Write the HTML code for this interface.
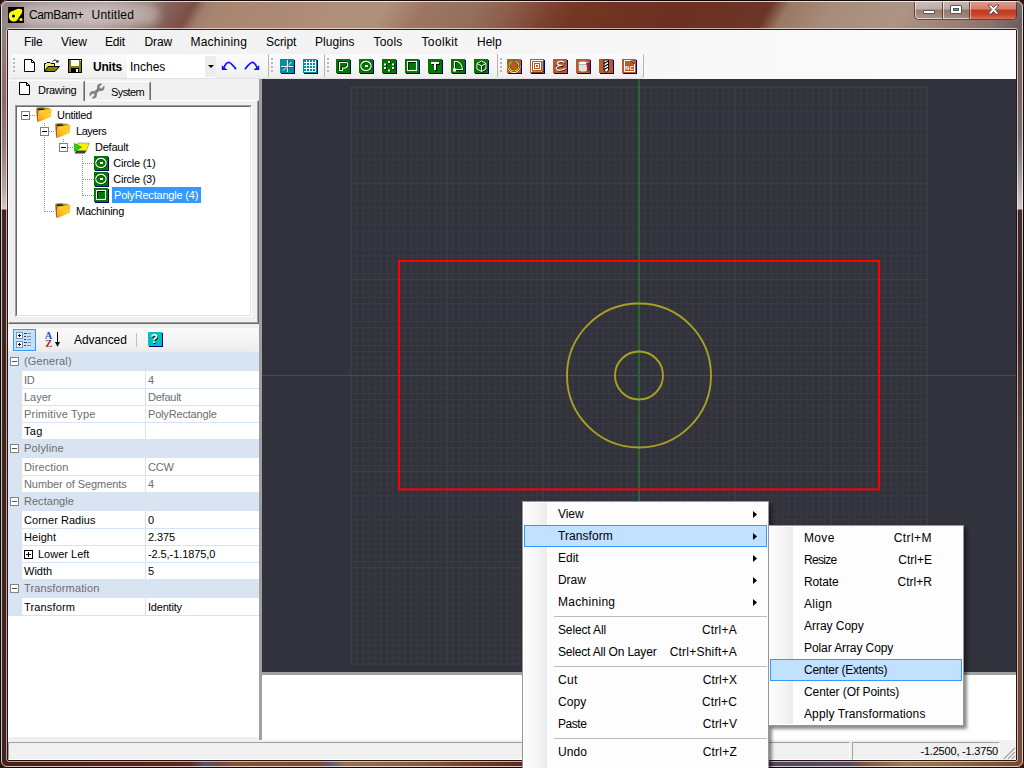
<!DOCTYPE html>
<html lang="en">
<head>
<meta charset="utf-8">
<title>CamBam+ Untitled</title>
<style>
html,body{margin:0;padding:0;}
body{width:1024px;height:768px;overflow:hidden;position:relative;background:#2e0e08;font-family:"Liberation Sans",sans-serif;font-size:12px;color:#000;}
.a{position:absolute;}
.t{position:absolute;white-space:nowrap;line-height:16px;}
#frame{left:0;top:0;width:1024px;height:768px;border-radius:7px;overflow:hidden;
 background:linear-gradient(95deg,#958383 0,#a39191 40px,#ad9b9b 110px,#a38884 165px,#a07c70 215px,#aa8672 270px,#b08c76 330px,#b6947e 380px,#9b7058 450px,#855440 500px,#80503c 540px,#6b3322 565px,#6a3020 680px,#6c3424 758px,#94705e 780px,#a88c7a 830px,#ae9484 900px,#9a7a6a 980px,#6a4a40 1024px);}
#client{left:8px;top:30px;width:1008px;height:730px;background:#f0f0f0;}
/* menu bar */
.mi{position:absolute;top:34px;line-height:16px;font-size:12px;white-space:nowrap;}
/* canvas */
#canvas{left:262px;top:79px;width:754px;height:593px;background:#32323c;overflow:hidden;}
/* tree */
.tr{position:absolute;font-size:11px;line-height:16px;white-space:nowrap;}
/* property grid */
.cat{position:absolute;left:8px;width:251px;height:19px;background:#d9e4f2;}
.cat span{position:absolute;left:16px;top:1px;font-size:11px;line-height:16px;color:#6d6d6d;white-space:nowrap;}
.cat i{position:absolute;left:2px;top:5px;width:7px;height:7px;border:1px solid #848484;background:#fff;}
.cat i:after{content:"";position:absolute;left:1px;top:3px;width:5px;height:1px;background:#505050;}
.pr{position:absolute;left:22px;width:237px;height:16px;overflow:hidden;background:#fff;border-bottom:1px solid #d9e4f2;font-size:11px;line-height:16px;white-space:nowrap;}
.pr b{position:absolute;left:2px;top:0;font-weight:normal;}
.pr u{position:absolute;left:123px;top:0;width:1px;height:18px;background:#d9e4f2;}
.pr.f b,.pr.f s{top:1px;}
.pr s{position:absolute;left:126px;top:0;text-decoration:none;}
.g{color:#6d6d6d;}
/* context menus */
.cm{position:absolute;background:#fdfdfd;border:1px solid #979797;box-shadow:3px 3px 3px rgba(0,0,0,0.45);}
.cm .gut{position:absolute;left:1px;top:1px;bottom:1px;width:23px;background:linear-gradient(90deg,#fcfcfc,#f4f4f4 60%,#ebebeb);}
.cmi{position:absolute;font-size:12px;line-height:16px;white-space:nowrap;}
.sep{position:absolute;height:1px;background:#bdbdbd;}
.hl{position:absolute;background:#c2e0ff;border:1px solid #3399ff;box-sizing:border-box;}
.arr{position:absolute;width:4px;height:7px;background:#000;clip-path:polygon(0 0,100% 50%,0 100%);}
</style>
</head>
<body>
<div id="frame" class="a">
<div class="a" style="left:0;top:0;width:1024px;height:30px;background:linear-gradient(120deg,#958383 8px,#a39191 42px,#ab9999 94px,#9a8480 124px,#86645c 146px,#7c5046 170px,#a07e6a 181px,#a8866e 194px,#aa8872 241px,#b08e78 293px,#b09078 337px,#9c7660 371px,#94705a 415px,#8a5c48 449px,#7c4430 479px,#733622 505px,#6c3020 596px,#6c3626 670px,#9a7862 686px,#a88c7a 726px,#ae9484 787px,#9a8074 839px,#857068 874px,#6e6060 894px)"></div>
<!-- side / bottom glass -->
<div class="a" style="left:0;top:28px;width:8px;height:740px;background:linear-gradient(180deg,#938181 0,#8a6a66 72px,#98807c 122px,#bca6a4 162px,#d8c8c8 181px,#45241f 182px,#3e221c 740px)"></div>
<div class="a" style="left:1016px;top:28px;width:8px;height:740px;background:linear-gradient(180deg,#6e6060 0,#7a6662 72px,#757070 107px,#999494 142px,#d2caca 181px,#432a28 182px,#402626 312px,#6a5048 422px,#705040 572px,#7a4a38 740px)"></div>
<div class="a" style="left:0;top:760px;width:1024px;height:8px;background:linear-gradient(90deg,#4a1e16 0,#5a2418 150px,#5e2a1e 190px,#5a5068 205px,#6a4a48 218px,#8a5030 235px,#7a4a30 320px,#605878 330px,#9a7050 345px,#8a5a3c 420px,#7a3c24 470px,#5e2a1c 522px,#5a2a1e 760px,#54465a 775px,#5a4a58 850px,#8a5c40 872px,#a07850 905px,#94683f 955px,#7a4a30 1010px)"></div>
<!-- title bar -->
<div class="a" style="left:0;top:0;width:1024px;height:768px;box-sizing:border-box;border:1px solid rgba(10,5,5,0.95);border-radius:7px;z-index:3"></div>
<div class="a" style="left:1px;top:1px;width:1022px;height:766px;box-sizing:border-box;border:1px solid rgba(255,255,255,0.75);border-radius:6px;z-index:3"></div>
<div class="a" style="left:6px;top:28px;width:1012px;height:734px;border:1px solid rgba(255,255,255,0.6);border-radius:3px;box-sizing:border-box"></div>
<div class="a" style="left:7px;top:29px;width:1010px;height:732px;border:1px solid rgba(35,15,12,0.9);border-radius:2px;box-sizing:border-box"></div>
<!-- glow behind title -->
<div class="a" style="left:20px;top:4px;width:140px;height:22px;border-radius:11px;background:rgba(255,255,255,0.35);filter:blur(5px)"></div>
<!-- app icon -->
<svg class="a" style="left:8px;top:7px" width="16" height="16" viewBox="0 0 16 16"><rect width="16" height="16" fill="#000"/><path d="M1 8 C1 5 4 4 6 3.5 C9 1.5 12 1 14 2.5 C15 5 13 8 11 10 C10 13 8 15 5 14.5 C2 14 0.5 11 1 8Z" fill="#ffff00"/><circle cx="5.5" cy="9" r="1.5" fill="#000"/><circle cx="13" cy="12.5" r="1.6" fill="#ffff00"/></svg>
<div class="t" style="letter-spacing:-0.36px;/*f*/left:29px;top:7px;font-size:12px;">CamBam+</div><div class="t" style="letter-spacing:0.25px;/*f*/left:91.5px;top:7px;font-size:12px;">Untitled</div>
<!-- window buttons -->
<div class="a" style="left:914px;top:0;width:103px;height:20px;border:1px solid rgba(60,35,30,0.75);border-top:none;border-radius:0 0 5px 5px;box-sizing:border-box;overflow:hidden;background:linear-gradient(180deg,rgba(255,255,255,0.45) 0,rgba(255,255,255,0.3) 9px,rgba(120,90,80,0.25) 10px,rgba(200,170,160,0.3) 19px)">
 <div class="a" style="left:0;top:0;width:101px;height:18px;border:1px solid rgba(255,255,255,0.6);border-top:none;border-radius:0 0 4px 4px"></div>
 <div class="a" style="left:27px;top:0;width:1px;height:19px;background:rgba(60,35,30,0.7)"></div>
 <div class="a" style="left:28px;top:0;width:1px;height:19px;background:rgba(255,255,255,0.6)"></div>
 <div class="a" style="left:54px;top:0;width:1px;height:19px;background:rgba(60,35,30,0.7)"></div>
 <div class="a" style="left:55px;top:0;width:47px;height:19px;background:linear-gradient(180deg,#e0a090 0,#d4806c 9px,#c23a1c 10px,#c8452a 15px,#d8705a 19px);border-left:1px solid rgba(255,255,255,0.5);border-right:1px solid rgba(255,255,255,0.5);box-sizing:border-box"></div>
 <!-- minimize glyph -->
 <div class="a" style="left:8px;top:10px;width:12px;height:4px;background:#fff;border:1px solid #535666;border-radius:1px;box-sizing:border-box"></div>
 <!-- maximize glyph -->
 <div class="a" style="left:35px;top:5px;width:12px;height:9px;border:1px solid #535666;border-radius:1px;box-sizing:border-box;background:#fff"></div>
 <div class="a" style="left:38px;top:8px;width:6px;height:3px;border:1px solid #535666;box-sizing:border-box;background:#a08878"></div>
 <!-- close glyph -->
 <svg class="a" style="left:72px;top:4px" width="13" height="11" viewBox="0 0 13 11"><path d="M1 1 L4.2 1 L6.5 3.6 L8.8 1 L12 1 L8.3 5.5 L12 10 L8.8 10 L6.5 7.4 L4.2 10 L1 10 L4.7 5.5 Z" fill="#fff" stroke="#50546a" stroke-width="1" stroke-linejoin="round"/></svg>
</div>
</div>
<div id="client" class="a"></div>

<!-- menu bar -->
<div class="a" style="left:8px;top:30px;width:1008px;height:49px;background:linear-gradient(90deg,#f0f0f0,#fbfbfb)"></div>
<div class="mi" style="letter-spacing:-0.2px;/*f*/left:24px">File</div>
<div class="mi" style="left:61px">View</div>
<div class="mi" style="letter-spacing:-0.16px;/*f*/left:105px">Edit</div>
<div class="mi" style="letter-spacing:-0.12px;/*f*/left:144.5px">Draw</div>
<div class="mi" style="letter-spacing:0.21px;/*f*/left:190.5px">Machining</div>
<div class="mi" style="letter-spacing:-0.06px;/*f*/left:266px">Script</div>
<div class="mi" style="letter-spacing:0.03px;/*f*/left:315px">Plugins</div>
<div class="mi" style="letter-spacing:0.21px;/*f*/left:373.5px">Tools</div>
<div class="mi" style="letter-spacing:0.36px;/*f*/left:421.5px">Toolkit</div>
<div class="mi" style="letter-spacing:-0.03px;/*f*/left:477px">Help</div>
<!-- toolbars -->
<div class="a" style="left:11px;top:54px;width:257px;height:24px;border-radius:0 1px 2px 0;background:linear-gradient(180deg,#fbfbfb,#f6f6f6 50%,#eeeeee);box-shadow:1px 0 0 #b4b4b4,0 1px 0 #e0e0e0"></div>
<div class="a" style="left:13px;top:58px;width:2px;height:14px;background:repeating-linear-gradient(180deg,#b8b8b8 0,#b8b8b8 2px,transparent 2px,transparent 4px)"></div>
<div class="a" style="left:269px;top:54px;width:55px;height:24px;border-radius:0 1px 2px 0;background:linear-gradient(180deg,#fbfbfb,#f6f6f6 50%,#eeeeee);box-shadow:1px 0 0 #b4b4b4,0 1px 0 #e0e0e0"></div>
<div class="a" style="left:271px;top:58px;width:2px;height:14px;background:repeating-linear-gradient(180deg,#b8b8b8 0,#b8b8b8 2px,transparent 2px,transparent 4px)"></div>
<div class="a" style="left:325px;top:54px;width:172px;height:24px;border-radius:0 1px 2px 0;background:linear-gradient(180deg,#fbfbfb,#f6f6f6 50%,#eeeeee);box-shadow:1px 0 0 #b4b4b4,0 1px 0 #e0e0e0"></div>
<div class="a" style="left:327px;top:58px;width:2px;height:14px;background:repeating-linear-gradient(180deg,#b8b8b8 0,#b8b8b8 2px,transparent 2px,transparent 4px)"></div>
<div class="a" style="left:498px;top:54px;width:145px;height:24px;border-radius:0 1px 2px 0;background:linear-gradient(180deg,#fbfbfb,#f6f6f6 50%,#eeeeee);box-shadow:1px 0 0 #b4b4b4,0 1px 0 #e0e0e0"></div>
<div class="a" style="left:500px;top:58px;width:2px;height:14px;background:repeating-linear-gradient(180deg,#b8b8b8 0,#b8b8b8 2px,transparent 2px,transparent 4px)"></div>
<div class="t" style="letter-spacing:-0.19px;/*f*/left:93px;top:59px;font-size:12px;font-weight:bold;">Units</div>
<div class="a" style="left:127px;top:55px;width:89px;height:23px;background:#fff"></div>
<div class="a" style="left:205px;top:56px;width:11px;height:21px;background:#ececec"></div>
<div class="a" style="left:208px;top:65px;width:0;height:0;border-top:3px solid #000;border-left:3px solid transparent;border-right:3px solid transparent"></div>
<div class="t" style="letter-spacing:-0.01px;/*f*/left:130px;top:59px;font-size:12px;">Inches</div>
<svg class="a" style="left:24px;top:59px" width="11" height="13" viewBox="0 0 11 13" ><path d="M0.5 0.5 H7.5 L10.5 3.5 V12.5 H0.5 Z" fill="#fff" stroke="#000"/><path d="M7.5 0.5 V3.5 H10.5" fill="none" stroke="#000"/></svg>
<svg class="a" style="left:44px;top:59px" width="16" height="13" viewBox="0 0 16 13" ><path d="M0.5 12.5 V4.5 H2 L3 3.5 H6 L7 4.5 H10.5 V7" fill="#f0f060" stroke="#000"/><path d="M0.5 12.5 L4 7.5 H15.5 L11 12.5 Z" fill="#808000" stroke="#000"/><path d="M8.5 2.5 C10 0.5 12.5 0.5 13.5 3" fill="none" stroke="#000"/><path d="M11.5 3.5 H14.5 V0.8 Z" fill="#000"/></svg>
<svg class="a" style="left:68px;top:59px" width="14" height="14" viewBox="0 0 14 14" ><rect x="0.5" y="0.5" width="13" height="13" fill="#808000" stroke="#000"/><rect x="3" y="1" width="8" height="6" fill="#fff"/><rect x="3" y="9" width="8" height="4" fill="#000"/><rect x="8" y="10" width="2" height="3" fill="#fff"/><rect x="12" y="1" width="1" height="1" fill="#fff"/></svg>
<svg class="a" style="left:221px;top:61px" width="16" height="10" viewBox="0 0 16 10"><path d="M2.8 7 Q5 1.4 7.8 1.4 Q9.6 1.4 14.6 7.6" fill="none" stroke="#1010ff" stroke-width="1.7" stroke-linecap="round"/><path d="M0.8 4.2 V8.9 H6.6 Z" fill="#1010ff"/></svg>
<svg class="a" style="left:244px;top:61px" width="16" height="10" viewBox="0 0 16 10"><path d="M13.2 7 Q11 1.4 8.2 1.4 Q6.4 1.4 1.4 7.6" fill="none" stroke="#1010ff" stroke-width="1.7" stroke-linecap="round"/><path d="M15.2 4.2 V8.9 H9.4 Z" fill="#1010ff"/></svg>
<svg class="a" style="left:280px;top:59px" width="15" height="15" viewBox="0 0 15 15" ><rect x="1" y="1" width="14" height="14" fill="#000080"/><rect x="0" y="0" width="14" height="14" fill="#0090a0"/><path d="M7.5 1 V13 M1 7.5 H13" stroke="#fff" stroke-width="1.2"/><path d="M3 11.5 L11.5 3" stroke="#fff" stroke-width="1"/><path d="M8.5 1 V13 M1 8.5 H13" stroke="#003040" stroke-width="0.6" opacity="0.6"/></svg>
<svg class="a" style="left:303px;top:59px" width="15" height="15" viewBox="0 0 15 15" ><rect x="1" y="1" width="14" height="14" fill="#000080"/><rect x="0" y="0" width="14" height="14" fill="#0090a0"/><path d="M3.5 1 V13 M6.5 1 V13 M9.5 1 V13 M12.5 1 V13 M1 3.5 H13 M1 6.5 H13 M1 9.5 H13 M1 12.5 H13" stroke="#fff" stroke-width="1" shape-rendering="crispEdges"/></svg>
<svg class="a" style="left:336px;top:59px" width="15" height="15" viewBox="0 0 15 15" ><rect x="1" y="1" width="14" height="14" fill="#000080"/><rect x="0" y="0" width="14" height="14" fill="#007800"/><path d="M3.5 3.5 H10 Q11.5 3.5 11.5 5 V7 L9.5 9 H6.5 V11.5 H3.5 Z" fill="none" stroke="#000" stroke-width="1" transform="translate(-0.8,-0.8)"/><path d="M3.5 3.5 H10 Q11.5 3.5 11.5 5 V7 L9.5 9 H6.5 V11.5 H3.5 Z" fill="none" stroke="#fff" stroke-width="1.1"/></svg>
<svg class="a" style="left:359px;top:59px" width="15" height="15" viewBox="0 0 15 15" ><rect x="1" y="1" width="14" height="14" fill="#000080"/><rect x="0" y="0" width="14" height="14" fill="#007800"/><ellipse cx="7.6" cy="7.4" rx="5.2" ry="4.6" fill="none" stroke="#000" stroke-width="1"/><ellipse cx="7" cy="7" rx="5.2" ry="4.6" fill="none" stroke="#fff" stroke-width="1.1"/><rect x="6" y="6" width="3" height="2" fill="#fff"/></svg>
<svg class="a" style="left:382px;top:59px" width="15" height="15" viewBox="0 0 15 15" ><rect x="1" y="1" width="14" height="14" fill="#000080"/><rect x="0" y="0" width="14" height="14" fill="#007800"/><rect x="6.8" y="2.8" width="2" height="2" fill="#000"/><rect x="6" y="2" width="2" height="2" fill="#fff"/><rect x="2.8" y="5.3" width="2" height="2" fill="#000"/><rect x="2" y="4.5" width="2" height="2" fill="#fff"/><rect x="10.8" y="5.3" width="2" height="2" fill="#000"/><rect x="10" y="4.5" width="2" height="2" fill="#fff"/><rect x="2.8" y="8.8" width="2" height="2" fill="#000"/><rect x="2" y="8" width="2" height="2" fill="#fff"/><rect x="10.8" y="8.8" width="2" height="2" fill="#000"/><rect x="10" y="8" width="2" height="2" fill="#fff"/><rect x="6.8" y="11.3" width="2" height="2" fill="#000"/><rect x="6" y="10.5" width="2" height="2" fill="#fff"/></svg>
<svg class="a" style="left:405px;top:59px" width="15" height="15" viewBox="0 0 15 15" ><rect x="1" y="1" width="14" height="14" fill="#000080"/><rect x="0" y="0" width="14" height="14" fill="#007800"/><rect x="3.5" y="3.5" width="8" height="8" fill="none" stroke="#000" stroke-width="1"/><rect x="2.5" y="2.5" width="9" height="9" fill="none" stroke="#fff" stroke-width="1.1"/></svg>
<svg class="a" style="left:428px;top:59px" width="15" height="15" viewBox="0 0 15 15" ><rect x="1" y="1" width="14" height="14" fill="#000080"/><rect x="0" y="0" width="14" height="14" fill="#007800"/><path d="M4 4 H12 V6 H9 V12 H7 V6 H4 Z" fill="#000"/><path d="M3 3 H11 V5 H8 V11 H6 V5 H3 Z" fill="#fff"/></svg>
<svg class="a" style="left:451px;top:59px" width="15" height="15" viewBox="0 0 15 15" ><rect x="1" y="1" width="14" height="14" fill="#000080"/><rect x="0" y="0" width="14" height="14" fill="#007800"/><path d="M3.5 11 V2.5 H6 Q11 4 11.5 10.5 H3.5" fill="none" stroke="#000" stroke-width="1" transform="translate(0.7,0.7)"/><path d="M3.5 11 V2.5 H6 Q11 4 11.5 10.5 H3.5" fill="none" stroke="#fff" stroke-width="1.1"/><rect x="2" y="9.5" width="3" height="3" fill="#fff"/></svg>
<svg class="a" style="left:474px;top:59px" width="15" height="15" viewBox="0 0 15 15" ><rect x="1" y="1" width="14" height="14" fill="#000080"/><rect x="0" y="0" width="14" height="14" fill="#007800"/><path d="M7.5 2 L12 4.5 V10 L7.5 12.5 L3 10 V4.5 Z M3 4.5 L7.5 7 L12 4.5 M7.5 7 V12.5" fill="none" stroke="#000" stroke-width="1" transform="translate(0.7,0.7)"/><path d="M7.5 2 L12 4.5 V10 L7.5 12.5 L3 10 V4.5 Z M3 4.5 L7.5 7 L12 4.5 M7.5 7 V12.5" fill="none" stroke="#fff" stroke-width="1"/></svg>
<svg class="a" style="left:507px;top:59px" width="15" height="15" viewBox="0 0 15 15" ><rect x="1" y="1" width="14" height="14" fill="#000080"/><rect x="0" y="0" width="14" height="14" fill="#b85a2c"/><circle cx="7" cy="7.5" r="5.6" fill="none" stroke="#fff" stroke-width="1.6"/><circle cx="7" cy="7" r="5" fill="none" stroke="#000" stroke-width="2.2"/><circle cx="7" cy="7" r="5" fill="none" stroke="#f0e000" stroke-width="1.2"/></svg>
<svg class="a" style="left:530px;top:59px" width="15" height="15" viewBox="0 0 15 15" ><rect x="1" y="1" width="14" height="14" fill="#000080"/><rect x="0" y="0" width="14" height="14" fill="#b85a2c"/><rect x="1.5" y="1.5" width="11" height="11" fill="none" stroke="#fff" stroke-width="1"/><rect x="3.5" y="3.5" width="7" height="7" fill="none" stroke="#fff" stroke-width="1"/><rect x="5.5" y="5.5" width="3" height="3" fill="none" stroke="#fff" stroke-width="1"/><path d="M13 2 V13 H2" fill="none" stroke="#000" stroke-width="0.8"/></svg>
<svg class="a" style="left:553px;top:59px" width="15" height="15" viewBox="0 0 15 15" ><rect x="1" y="1" width="14" height="14" fill="#000080"/><rect x="0" y="0" width="14" height="14" fill="#b85a2c"/><path d="M11.5 3.5 C8 1.5 4 2.5 4.5 5 C5 6.5 8 6.5 9.5 6.5 M9.5 6.5 C5 6.5 2.5 8 3.5 10 C4.5 12 9 11.5 12.5 9.5 M2 6.5 H9" fill="none" stroke="#000" stroke-width="1" transform="translate(0.7,0.7)"/><path d="M11.5 3.5 C8 1.5 4 2.5 4.5 5 C5 6.5 8 6.5 9.5 6.5 M9.5 6.5 C5 6.5 2.5 8 3.5 10 C4.5 12 9 11.5 12.5 9.5" fill="none" stroke="#fff" stroke-width="1.2"/></svg>
<svg class="a" style="left:576px;top:59px" width="15" height="15" viewBox="0 0 15 15" ><rect x="1" y="1" width="14" height="14" fill="#000080"/><rect x="0" y="0" width="14" height="14" fill="#b85a2c"/><path d="M2.5 4 V11 C2.5 13.5 11.5 13.5 11.5 11 V4" fill="#d8d4d0" stroke="#777" stroke-width="0.6"/><ellipse cx="7" cy="4" rx="4.5" ry="1.8" fill="#fff" stroke="#888" stroke-width="0.6"/><path d="M10 4 H14 V12 L11.5 13 Z" fill="#a02818"/><path d="M3 6.5 Q7 8.5 11 6.5 M3 8.5 Q7 10.5 11 8.5 M3 10.5 Q7 12.5 11 10.5" fill="none" stroke="#fff" stroke-width="0.7"/></svg>
<svg class="a" style="left:599px;top:59px" width="15" height="15" viewBox="0 0 15 15" ><rect x="1" y="1" width="14" height="14" fill="#000080"/><rect x="0" y="0" width="14" height="14" fill="#b85a2c"/><path d="M5 1 H9.5 V11 L7.2 13.5 L5 11 Z" fill="#fff" stroke="#000" stroke-width="0.9"/><path d="M5 4.5 L9.5 2 M5 7.5 L9.5 5 M5 10.5 L9.5 8" stroke="#000" stroke-width="1.1"/></svg>
<svg class="a" style="left:622px;top:59px" width="15" height="15" viewBox="0 0 15 15" ><rect x="1" y="1" width="14" height="14" fill="#000080"/><rect x="0" y="0" width="14" height="14" fill="#b85a2c"/><path d="M2.5 1.5 H9.5 L12.5 4.5 V12.5 H2.5 Z" fill="none" stroke="#fff" stroke-width="1"/><path d="M9 1.5 L12.5 5" stroke="#000" stroke-width="1"/><text x="3.2" y="11" font-family="Liberation Sans,sans-serif" font-size="5.5" font-weight="bold" fill="#fff" textLength="8.5">NC</text></svg>

<!-- left panel -->
<div class="a" style="left:259px;top:79px;width:3px;height:661px;background:#a0a0a0"></div>
<div class="a" style="left:8px;top:100px;width:251px;height:224px;box-sizing:border-box;border-left:1px solid #fff;border-top:1px solid #fff;border-right:1px solid #696969;border-bottom:1px solid #696969"></div>
<div class="a" style="left:9px;top:101px;width:249px;height:222px;box-sizing:border-box;border-right:1px solid #a0a0a0;border-bottom:1px solid #a0a0a0"></div>
<div class="a" style="left:8px;top:80px;width:77px;height:21px;background:#f0f0f0;box-sizing:border-box;border-left:1px solid #fff;border-top:1px solid #fff;border-right:1px solid #696969;border-radius:2px 2px 0 0"></div>
<div class="a" style="left:83px;top:82px;width:1px;height:19px;background:#a0a0a0"></div>
<div class="a" style="left:85px;top:81px;width:66px;height:19px;box-sizing:border-box;border-top:1px solid #fff;border-right:1px solid #696969;border-radius:0 2px 0 0"></div>
<div class="a" style="left:149px;top:83px;width:1px;height:17px;background:#a0a0a0"></div>
<svg class="a" style="left:19px;top:82px" width="11" height="13" viewBox="0 0 11 13" ><path d="M0.5 0.5 H7.5 L10.5 3.5 V12.5 H0.5 Z" fill="#fff" stroke="#000"/><path d="M7.5 0.5 V3.5 H10.5" fill="none" stroke="#000"/></svg>
<div class="t" style="letter-spacing:-0.29px;/*f*/left:38px;top:82px;font-size:11px;">Drawing</div>
<svg class="a" style="left:89px;top:83px" width="16" height="16" viewBox="0 0 16 16"><path d="M4.6 11.4 L11.4 4.6" stroke="#808080" stroke-width="3.2"/><circle cx="11.8" cy="4.2" r="3.7" fill="#808080"/><circle cx="4.2" cy="11.8" r="3.7" fill="#808080"/><path d="M11.2 4.8 L15.5 0.5" stroke="#f0f0f0" stroke-width="2.6"/><path d="M4.8 11.2 L0.5 15.5" stroke="#f0f0f0" stroke-width="2.6"/></svg>
<div class="t" style="letter-spacing:-0.6px;/*f*/left:111px;top:84px;font-size:11px;">System</div>
<div class="a" style="left:15px;top:105px;width:237px;height:212px;box-sizing:border-box;background:#fff;border-left:1px solid #a0a0a0;border-top:1px solid #a0a0a0;border-right:1px solid #fff;border-bottom:1px solid #fff"></div>
<div class="a" style="left:16px;top:106px;width:235px;height:210px;box-sizing:border-box;border-left:1px solid #696969;border-top:1px solid #696969;border-right:1px solid #e3e3e3;border-bottom:1px solid #e3e3e3"></div>
<!-- tree -->
<div class="a" style="left:30px;top:115px;width:6px;height:1px;background:repeating-linear-gradient(90deg,#909090 0,#909090 1px,transparent 1px,transparent 2px)"></div>
<div class="a" style="left:44px;top:123px;width:1px;height:89px;background:repeating-linear-gradient(180deg,#909090 0,#909090 1px,transparent 1px,transparent 2px)"></div>
<div class="a" style="left:49px;top:131px;width:6px;height:1px;background:repeating-linear-gradient(90deg,#909090 0,#909090 1px,transparent 1px,transparent 2px)"></div>
<div class="a" style="left:45px;top:211px;width:10px;height:1px;background:repeating-linear-gradient(90deg,#909090 0,#909090 1px,transparent 1px,transparent 2px)"></div>
<div class="a" style="left:63px;top:139px;width:1px;height:4px;background:repeating-linear-gradient(180deg,#909090 0,#909090 1px,transparent 1px,transparent 2px)"></div>
<div class="a" style="left:68px;top:147px;width:6px;height:1px;background:repeating-linear-gradient(90deg,#909090 0,#909090 1px,transparent 1px,transparent 2px)"></div>
<div class="a" style="left:82px;top:155px;width:1px;height:41px;background:repeating-linear-gradient(180deg,#909090 0,#909090 1px,transparent 1px,transparent 2px)"></div>
<div class="a" style="left:83px;top:163px;width:11px;height:1px;background:repeating-linear-gradient(90deg,#909090 0,#909090 1px,transparent 1px,transparent 2px)"></div>
<div class="a" style="left:83px;top:179px;width:11px;height:1px;background:repeating-linear-gradient(90deg,#909090 0,#909090 1px,transparent 1px,transparent 2px)"></div>
<div class="a" style="left:83px;top:195px;width:11px;height:1px;background:repeating-linear-gradient(90deg,#909090 0,#909090 1px,transparent 1px,transparent 2px)"></div>
<div class="a" style="left:21px;top:111px;width:9px;height:9px;box-sizing:border-box;border:1px solid #808080;background:#fff"></div><div class="a" style="left:23px;top:115px;width:5px;height:1px;background:#000"></div>
<div class="a" style="left:40px;top:127px;width:9px;height:9px;box-sizing:border-box;border:1px solid #808080;background:#fff"></div><div class="a" style="left:42px;top:131px;width:5px;height:1px;background:#000"></div>
<div class="a" style="left:59px;top:143px;width:9px;height:9px;box-sizing:border-box;border:1px solid #808080;background:#fff"></div><div class="a" style="left:61px;top:147px;width:5px;height:1px;background:#000"></div>
<svg class="a" style="left:36px;top:107px" width="16" height="16" viewBox="0 0 16 16" ><defs><linearGradient id="fg1" x1="1" y1="0" x2="0" y2="1"><stop offset="0" stop-color="#ffc628"/><stop offset="0.5" stop-color="#ffca30"/><stop offset="0.8" stop-color="#ffa818"/><stop offset="1" stop-color="#f08a08"/></linearGradient></defs>
<path d="M0.3 0.4 L5.9 0 L13.4 0.9 L13.9 2.4 L2.7 3.8 Z" fill="#a89a28"/>
<path d="M1.3 1.6 L7.4 1.5 L9 2.6 L2.7 3.8 Z" fill="#14142a"/>
<path d="M0.3 0.8 L2.7 3.6 L2.2 15 L1.2 14.4 L0.5 6.2 Z" fill="#a85c10"/>
<path d="M2.7 3.6 L15.6 2 L14.7 10 L2.2 15 Z" fill="url(#fg1)"/>
<path d="M10.8 8.4 L12.9 6.6 L12.7 8.6 Z" fill="#ffee30"/></svg>
<svg class="a" style="left:55px;top:123px" width="16" height="16" viewBox="0 0 16 16" ><defs><linearGradient id="fg2" x1="1" y1="0" x2="0" y2="1"><stop offset="0" stop-color="#ffc628"/><stop offset="0.5" stop-color="#ffca30"/><stop offset="0.8" stop-color="#ffa818"/><stop offset="1" stop-color="#f08a08"/></linearGradient></defs>
<path d="M0.3 0.4 L5.9 0 L13.4 0.9 L13.9 2.4 L2.7 3.8 Z" fill="#a89a28"/>
<path d="M1.3 1.6 L7.4 1.5 L9 2.6 L2.7 3.8 Z" fill="#14142a"/>
<path d="M0.3 0.8 L2.7 3.6 L2.2 15 L1.2 14.4 L0.5 6.2 Z" fill="#a85c10"/>
<path d="M2.7 3.6 L15.6 2 L14.7 10 L2.2 15 Z" fill="url(#fg2)"/>
<path d="M10.8 8.4 L12.9 6.6 L12.7 8.6 Z" fill="#ffee30"/></svg>
<svg class="a" style="left:55px;top:203px" width="16" height="16" viewBox="0 0 16 16" ><defs><linearGradient id="fg3" x1="1" y1="0" x2="0" y2="1"><stop offset="0" stop-color="#ffc628"/><stop offset="0.5" stop-color="#ffca30"/><stop offset="0.8" stop-color="#ffa818"/><stop offset="1" stop-color="#f08a08"/></linearGradient></defs>
<path d="M0.3 0.4 L5.9 0 L13.4 0.9 L13.9 2.4 L2.7 3.8 Z" fill="#a89a28"/>
<path d="M1.3 1.6 L7.4 1.5 L9 2.6 L2.7 3.8 Z" fill="#14142a"/>
<path d="M0.3 0.8 L2.7 3.6 L2.2 15 L1.2 14.4 L0.5 6.2 Z" fill="#a85c10"/>
<path d="M2.7 3.6 L15.6 2 L14.7 10 L2.2 15 Z" fill="url(#fg3)"/>
<path d="M10.8 8.4 L12.9 6.6 L12.7 8.6 Z" fill="#ffee30"/></svg>
<svg class="a" style="left:74px;top:141px" width="16" height="13" viewBox="0 0 16 13" ><path d="M2 9.5 H12.5 L10.8 12.5 H0.5 Z" fill="#404040"/><path d="M4 2 H15.5 L12.5 9.5 H1 Z" fill="#f8f000" stroke="#606000" stroke-width="0.4"/><path d="M0.5 2.5 L7.5 6.2 L0.5 10 Z" fill="#10e010" stroke="#006000" stroke-width="0.5"/></svg>
<svg class="a" style="left:94px;top:156px" width="15" height="15" viewBox="0 0 15 15" ><rect x="1" y="1" width="14" height="14" fill="#000080"/><rect x="0" y="0" width="14" height="14" fill="#007800"/><ellipse cx="7.6" cy="7.4" rx="5.2" ry="4.6" fill="none" stroke="#000" stroke-width="1"/><ellipse cx="7" cy="7" rx="5.2" ry="4.6" fill="none" stroke="#fff" stroke-width="1.1"/><rect x="6" y="6" width="3" height="2" fill="#fff"/></svg>
<svg class="a" style="left:94px;top:172px" width="15" height="15" viewBox="0 0 15 15" ><rect x="1" y="1" width="14" height="14" fill="#000080"/><rect x="0" y="0" width="14" height="14" fill="#007800"/><ellipse cx="7.6" cy="7.4" rx="5.2" ry="4.6" fill="none" stroke="#000" stroke-width="1"/><ellipse cx="7" cy="7" rx="5.2" ry="4.6" fill="none" stroke="#fff" stroke-width="1.1"/><rect x="6" y="6" width="3" height="2" fill="#fff"/></svg>
<svg class="a" style="left:94px;top:188px" width="15" height="15" viewBox="0 0 15 15" ><rect x="1" y="1" width="14" height="14" fill="#000080"/><rect x="0" y="0" width="14" height="14" fill="#007800"/><rect x="3.5" y="3.5" width="8" height="8" fill="none" stroke="#000" stroke-width="1"/><rect x="2.5" y="2.5" width="9" height="9" fill="none" stroke="#fff" stroke-width="1.1"/></svg>
<div class="a" style="left:112px;top:187px;width:89px;height:16px;background:#3399ff"></div>
<div class="tr" style="letter-spacing:-0.31px;/*f*/left:57px;top:107px;color:#000">Untitled</div>
<div class="tr" style="letter-spacing:-0.47px;/*f*/left:76px;top:123px;color:#000">Layers</div>
<div class="tr" style="letter-spacing:-0.22px;/*f*/left:95px;top:139px;color:#000">Default</div>
<div class="tr" style="letter-spacing:-0.26px;/*f*/left:113.3px;top:155px;color:#000">Circle (1)</div>
<div class="tr" style="letter-spacing:-0.26px;/*f*/left:113.3px;top:171px;color:#000">Circle (3)</div>
<div class="tr" style="letter-spacing:-0.19px;/*f*/left:114px;top:187px;color:#fff">PolyRectangle (4)</div>
<div class="tr" style="letter-spacing:-0.22px;/*f*/left:76px;top:203px;color:#000">Machining</div>

<!-- property grid -->
<div class="a" style="left:8px;top:328px;width:250px;height:24px;border-radius:0 0 3px 0;background:linear-gradient(180deg,#fbfbfb,#f4f4f4 60%,#ebebeb)"></div>
<div class="a" style="left:8px;top:353px;width:251px;height:384px;background:#fff"></div>
<div class="a" style="left:8px;top:353px;width:14px;height:263px;background:#d9e4f2"></div>
<div class="a" style="left:13px;top:329px;width:23px;height:22px;box-sizing:border-box;border:1px solid #3399ff;background:#c2e0ff"></div>
<svg class="a" style="left:16px;top:332px" width="16" height="16" viewBox="0 0 16 16" ><g shape-rendering="crispEdges"><rect x="0.5" y="0.5" width="6" height="6" fill="#fff" stroke="#8094b4"/><rect x="0.5" y="9.5" width="6" height="6" fill="#fff" stroke="#8094b4"/><path d="M2 3.5 H5 M3.5 2 V5 M2 12.5 H5 M3.5 11 V14" stroke="#000"/><path d="M8 1.5 H11 M8 4.5 H10 M8 7.5 H10 M8 10.5 H11 M8 13.5 H10" stroke="#404040"/><path d="M11 4.5 H15 M11 7.5 H15 M11 13.5 H15 M12 1.5 H15 M12 10.5 H15" stroke="#7090c0"/></g></svg>
<svg class="a" style="left:45px;top:331px" width="16" height="17" viewBox="0 0 16 17"><text x="-0.3" y="8" font-family="Liberation Serif,serif" font-size="10.5" font-weight="bold" fill="#2c50b8">A</text><text x="0.3" y="16.3" font-family="Liberation Serif,serif" font-size="10.5" font-weight="bold" fill="#a03038">Z</text><path d="M12.5 1 V14" stroke="#000" stroke-width="1"/><path d="M10 11 H15 L12.5 15.8 Z" fill="#000"/></svg>
<div class="t" style="letter-spacing:-0.07px;/*f*/left:74px;top:332px;font-size:12px;">Advanced</div>
<div class="a" style="left:136px;top:333px;width:1px;height:14px;background:#c0c0c0"></div>
<svg class="a" style="left:148px;top:332px" width="15" height="15" viewBox="0 0 15 15" ><rect x="1" y="1" width="14" height="14" fill="#000080"/><rect x="0" y="0" width="14" height="14" fill="#00c0c0"/><text x="3.2" y="12" font-family="Liberation Sans,sans-serif" font-size="12" font-weight="bold" fill="#000">?</text><text x="2.6" y="11.4" font-family="Liberation Sans,sans-serif" font-size="12" font-weight="bold" fill="#fff">?</text></svg>
<div class="cat" style="top:352px"><i></i><span style="letter-spacing:0.14px;/*f*/">(General)</span></div>
<div class="pr g f" style="top:371px;height:17px"><b style="letter-spacing:-0.4px;/*f*/">ID</b><u></u><s>4</s></div>
<div class="pr g" style="top:389px;height:16px"><b style="letter-spacing:-0.03px;/*f*/">Layer</b><u></u><s style="letter-spacing:-0.24px;/*f*/">Default</s></div>
<div class="pr g" style="top:406px;height:16px"><b style="letter-spacing:0.2px;/*f*/">Primitive Type</b><u></u><s style="letter-spacing:-0.18px;/*f*/">PolyRectangle</s></div>
<div class="pr" style="top:423px;height:16px"><b style="letter-spacing:0.28px;/*f*/">Tag</b><u></u><s></s></div>
<div class="cat" style="top:439px"><i></i><span style="letter-spacing:0.16px;/*f*/">Polyline</span></div>
<div class="pr g f" style="top:458px;height:17px"><b style="letter-spacing:0.13px;/*f*/">Direction</b><u></u><s style="letter-spacing:-0.16px;/*f*/">CCW</s></div>
<div class="pr g" style="top:476px;height:16px"><b style="letter-spacing:-0.07px;/*f*/">Number of Segments</b><u></u><s>4</s></div>
<div class="cat" style="top:492px"><i></i><span style="letter-spacing:0.03px;/*f*/">Rectangle</span></div>
<div class="pr f" style="top:511px;height:17px"><b style="letter-spacing:0.04px;/*f*/">Corner Radius</b><u></u><s>0</s></div>
<div class="pr" style="top:529px;height:16px"><b style="letter-spacing:0.04px;/*f*/">Height</b><u></u><s style="letter-spacing:-0.13px;/*f*/">2.375</s></div>
<div class="pr" style="top:546px;height:16px"><b><i style="position:absolute;left:0;top:4px;width:7px;height:7px;border:1px solid #000;background:#fff"></i><i style="position:absolute;left:2px;top:8px;width:5px;height:1px;background:#000"></i><i style="position:absolute;left:4px;top:6px;width:1px;height:5px;background:#000"></i><span style="margin-left:14px">Lower Left</span></b><u></u><s style="letter-spacing:-0.09px;/*f*/">-2.5,-1.1875,0</s></div>
<div class="pr" style="top:563px;height:16px"><b style="letter-spacing:0.01px;/*f*/">Width</b><u></u><s>5</s></div>
<div class="cat" style="top:579px"><i></i><span style="letter-spacing:0.13px;/*f*/">Transformation</span></div>
<div class="pr f" style="top:598px;height:17px"><b style="letter-spacing:0.16px;/*f*/">Transform</b><u></u><s style="letter-spacing:-0.21px;/*f*/">Identity</s></div>



<div id="canvas" class="a"><svg class="a" style="left:0;top:0" width="754" height="593" viewBox="0 0 754 593">
<path d="M95 8V585.06M101 8V585.06M107 8V585.06M113 8V585.06M119 8V585.06M125 8V585.06M131 8V585.06M137 8V585.06M143 8V585.06M149 8V585.06M155 8V585.06M161 8V585.06M167 8V585.06M173 8V585.06M179 8V585.06M191 8V585.06M197 8V585.06M203 8V585.06M209 8V585.06M215 8V585.06M221 8V585.06M227 8V585.06M233 8V585.06M239 8V585.06M245 8V585.06M251 8V585.06M257 8V585.06M263 8V585.06M269 8V585.06M275 8V585.06M287 8V585.06M293 8V585.06M299 8V585.06M305 8V585.06M311 8V585.06M317 8V585.06M323 8V585.06M329 8V585.06M335 8V585.06M341 8V585.06M347 8V585.06M353 8V585.06M359 8V585.06M365 8V585.06M371 8V585.06M383 8V585.06M389 8V585.06M395 8V585.06M401 8V585.06M407 8V585.06M413 8V585.06M419 8V585.06M425 8V585.06M431 8V585.06M437 8V585.06M443 8V585.06M449 8V585.06M455 8V585.06M461 8V585.06M467 8V585.06M479 8V585.06M485 8V585.06M491 8V585.06M497 8V585.06M503 8V585.06M509 8V585.06M515 8V585.06M521 8V585.06M527 8V585.06M533 8V585.06M539 8V585.06M545 8V585.06M551 8V585.06M557 8V585.06M563 8V585.06M575 8V585.06M581 8V585.06M587 8V585.06M593 8V585.06M599 8V585.06M605 8V585.06M611 8V585.06M617 8V585.06M623 8V585.06M629 8V585.06M635 8V585.06M641 8V585.06M647 8V585.06M653 8V585.06M659 8V585.06M89 14.01H665M89 20.02H665M89 26.03H665M89 32.04H665M89 38.05H665M89 44.07H665M89 50.08H665M89 56.09H665M89 62.10H665M89 68.11H665M89 74.12H665M89 80.13H665M89 86.14H665M89 92.15H665M89 98.17H665M89 110.19H665M89 116.20H665M89 122.21H665M89 128.22H665M89 134.23H665M89 140.24H665M89 146.25H665M89 152.26H665M89 158.28H665M89 164.29H665M89 170.30H665M89 176.31H665M89 182.32H665M89 188.33H665M89 194.34H665M89 206.36H665M89 212.37H665M89 218.38H665M89 224.40H665M89 230.41H665M89 236.42H665M89 242.43H665M89 248.44H665M89 254.45H665M89 260.46H665M89 266.47H665M89 272.48H665M89 278.50H665M89 284.51H665M89 290.52H665M89 302.54H665M89 308.55H665M89 314.56H665M89 320.57H665M89 326.58H665M89 332.59H665M89 338.61H665M89 344.62H665M89 350.63H665M89 356.64H665M89 362.65H665M89 368.66H665M89 374.67H665M89 380.68H665M89 386.69H665M89 398.72H665M89 404.73H665M89 410.74H665M89 416.75H665M89 422.76H665M89 428.77H665M89 434.78H665M89 440.79H665M89 446.80H665M89 452.81H665M89 458.82H665M89 464.84H665M89 470.85H665M89 476.86H665M89 482.87H665M89 494.89H665M89 500.90H665M89 506.91H665M89 512.92H665M89 518.93H665M89 524.95H665M89 530.96H665M89 536.97H665M89 542.98H665M89 548.99H665M89 555.00H665M89 561.01H665M89 567.02H665M89 573.03H665M89 579.04H665" stroke="#3a3a41" stroke-width="1" fill="none"/>
<path d="M89 8V585.06M185 8V585.06M281 8V585.06M377 8V585.06M473 8V585.06M569 8V585.06M665 8V585.06M89 8.00H665M89 104.18H665M89 200.35H665M89 296.53H665M89 392.70H665M89 488.88H665M89 585.06H665" stroke="#424248" stroke-width="1" fill="none"/>
<path d="M377 0V593" stroke="#169426" stroke-width="1"/>
<rect x="0" y="296" width="754" height="1" fill="#ff0000"/>
<rect x="137" y="182" width="480" height="228.4" fill="none" stroke="#ff0000" stroke-width="2"/>
<circle cx="377" cy="296.5" r="72" fill="none" stroke="#a8a024" stroke-width="1.9"/>
<circle cx="377" cy="296.5" r="24" fill="none" stroke="#a8a024" stroke-width="1.9"/>
</svg></div>
<!-- below canvas -->
<div class="a" style="left:262px;top:672px;width:754px;height:3px;background:#a0a0a0"></div>
<div class="a" style="left:262px;top:675px;width:754px;height:65px;background:#fff"></div>
<div class="a" style="left:8px;top:740px;width:1008px;height:20px;background:#f0f0f0"></div>
<div class="a" style="left:8px;top:742px;width:842px;height:18px;box-sizing:border-box;border-left:1px solid #a0a0a0;border-top:1px solid #a0a0a0;border-right:1px solid #fff;border-bottom:1px solid #fff"></div>
<div class="a" style="left:852px;top:742px;width:148px;height:18px;box-sizing:border-box;border-left:1px solid #a0a0a0;border-top:1px solid #a0a0a0;border-right:1px solid #fff;border-bottom:1px solid #fff"></div>
<div class="t" style="letter-spacing:-0.2px;/*f*/left:852px;top:743px;width:146px;text-align:right;font-size:11px;">-1.2500, -1.3750</div>
<svg class="a" style="left:1003px;top:747px" width="13" height="13" viewBox="0 0 13 13"><path d="M1 12 L12 1 M5 12 L12 5 M9 12 L12 9" stroke="#a0a0a0" stroke-width="1.4"/><path d="M2 12.6 L12.6 2 M6 12.6 L12.6 6 M10 12.6 L12.6 10" stroke="#fff" stroke-width="0.8"/></svg>

<div class="a" style="left:0;top:0;width:0;height:0;z-index:5">
<!-- context menu -->
<div class="cm" style="left:522px;top:501px;width:245px;height:280px"><div class="gut"></div></div>
<div class="hl" style="left:524px;top:525px;width:243px;height:22px"></div>
<div class="cmi" style="letter-spacing:-0.05px;/*f*/left:558px;top:506px">View</div>
<div class="arr" style="left:753px;top:511px"></div>
<div class="cmi" style="letter-spacing:0.06px;/*f*/left:558px;top:528px">Transform</div>
<div class="arr" style="left:753px;top:533px"></div>
<div class="cmi" style="letter-spacing:-0.02px;/*f*/left:558px;top:550px">Edit</div>
<div class="arr" style="left:753px;top:555px"></div>
<div class="cmi" style="letter-spacing:-0.05px;/*f*/left:558px;top:572px">Draw</div>
<div class="arr" style="left:753px;top:577px"></div>
<div class="cmi" style="letter-spacing:0.29px;/*f*/left:558px;top:594px">Machining</div>
<div class="arr" style="left:753px;top:599px"></div>
<div class="cmi" style="letter-spacing:-0.14px;/*f*/left:558px;top:622px">Select All</div>
<div class="cmi" style="letter-spacing:0.24px;/*f*/left:637px;width:100px;text-align:right;top:622px">Ctrl+A</div>
<div class="cmi" style="letter-spacing:-0.19px;/*f*/left:558px;top:644px">Select All On Layer</div>
<div class="cmi" style="letter-spacing:0.22px;/*f*/left:637px;width:100px;text-align:right;top:644px">Ctrl+Shift+A</div>
<div class="cmi" style="letter-spacing:0.37px;/*f*/left:558px;top:672px">Cut</div>
<div class="cmi" style="letter-spacing:0.1px;/*f*/left:637px;width:100px;text-align:right;top:672px">Ctrl+X</div>
<div class="cmi" style="letter-spacing:0.12px;/*f*/left:558px;top:694px">Copy</div>
<div class="cmi" style="letter-spacing:0.13px;/*f*/left:637px;width:100px;text-align:right;top:694px">Ctrl+C</div>
<div class="cmi" style="letter-spacing:-0.44px;/*f*/left:558px;top:716px">Paste</div>
<div class="cmi" style="letter-spacing:0.1px;/*f*/left:637px;width:100px;text-align:right;top:716px">Ctrl+V</div>
<div class="cmi" style="letter-spacing:0.08px;/*f*/left:558px;top:744px">Undo</div>
<div class="cmi" style="letter-spacing:0.22px;/*f*/left:637px;width:100px;text-align:right;top:744px">Ctrl+Z</div>
<div class="sep" style="left:554px;top:616px;width:213px"></div>
<div class="sep" style="left:554px;top:666px;width:213px"></div>
<div class="sep" style="left:554px;top:738px;width:213px"></div>
<div class="cm" style="left:768px;top:525px;width:194px;height:199px"><div class="gut"></div></div>
<div class="hl" style="left:770px;top:659px;width:192px;height:22px"></div>
<div class="cmi" style="letter-spacing:0.34px;/*f*/left:804px;top:530px">Move</div>
<div class="cmi" style="letter-spacing:0.45px;/*f*/left:832px;width:100px;text-align:right;top:530px">Ctrl+M</div>
<div class="cmi" style="letter-spacing:-0.7px;/*f*/left:804px;top:552px">Resize</div>
<div class="cmi" style="letter-spacing:0.02px;/*f*/left:832px;width:100px;text-align:right;top:552px">Ctrl+E</div>
<div class="cmi" style="letter-spacing:-0.13px;/*f*/left:804px;top:574px">Rotate</div>
<div class="cmi" style="letter-spacing:0.04px;/*f*/left:832px;width:100px;text-align:right;top:574px">Ctrl+R</div>
<div class="cmi" style="letter-spacing:0.28px;/*f*/left:804px;top:596px">Align</div>
<div class="cmi" style="letter-spacing:-0.04px;/*f*/left:804px;top:618px">Array Copy</div>
<div class="cmi" style="letter-spacing:-0.09px;/*f*/left:804px;top:640px">Polar Array Copy</div>
<div class="cmi" style="letter-spacing:-0.25px;/*f*/left:804px;top:662px">Center (Extents)</div>
<div class="cmi" style="letter-spacing:-0.08px;/*f*/left:804px;top:684px">Center (Of Points)</div>
<div class="cmi" style="letter-spacing:0.1px;/*f*/left:804px;top:706px">Apply Transformations</div>
</div>
</body>
</html>
